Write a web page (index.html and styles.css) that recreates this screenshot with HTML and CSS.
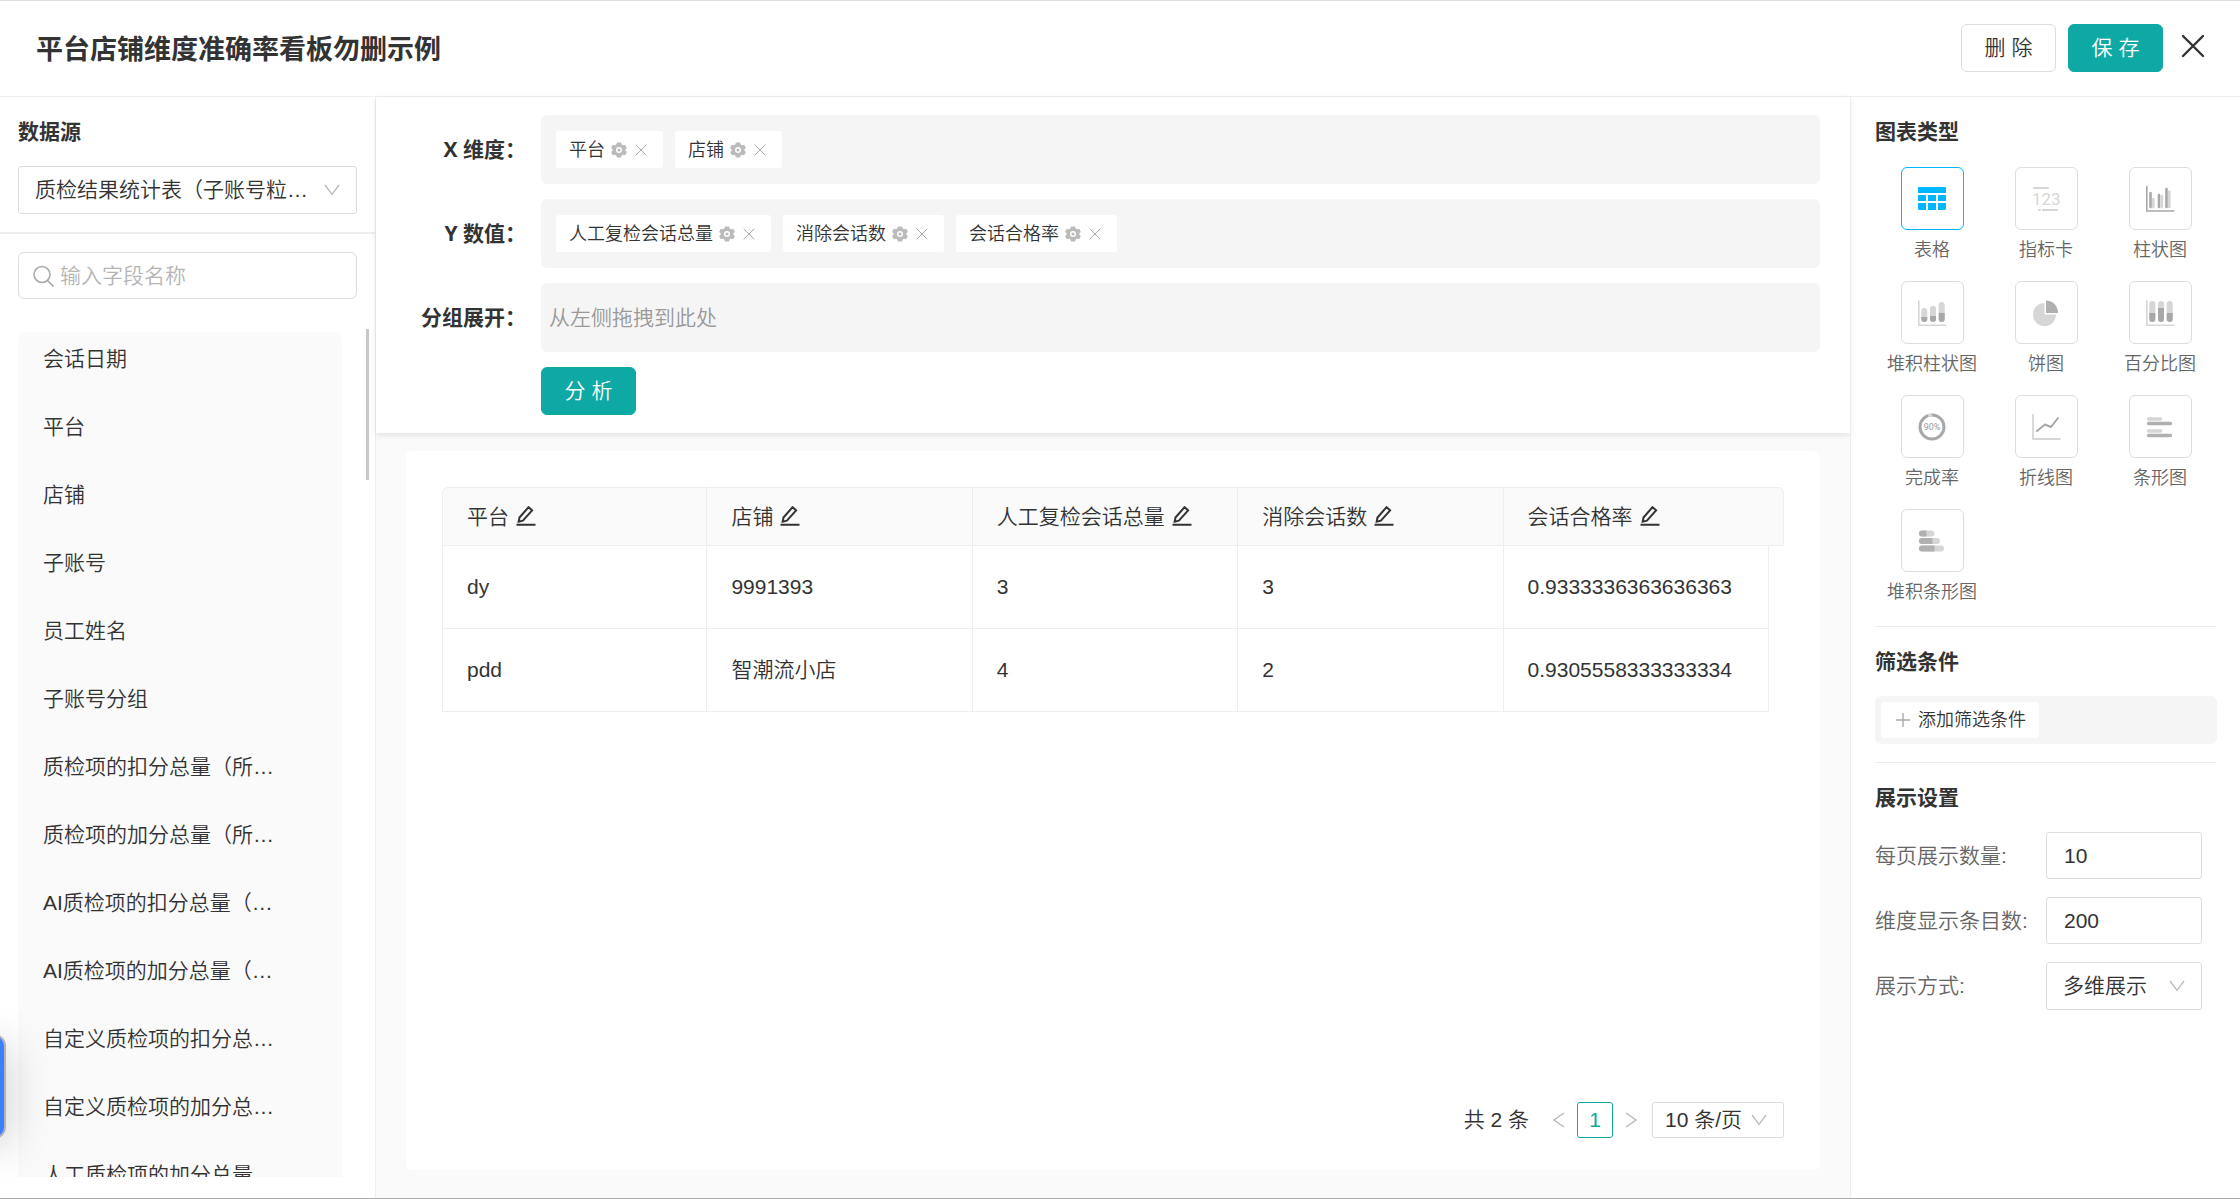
FILE: index.html
```html
<!DOCTYPE html>
<html lang="zh-CN">
<head>
<meta charset="utf-8">
<title>平台店铺维度准确率看板勿删示例</title>
<link rel="stylesheet" href="styles.css">
</head>
<body>
<svg class="sprite" aria-hidden="true">
  <symbol id="gear" viewBox="0 0 16 16"><path fill-rule="evenodd" d="M6 .5 10 .5l.7 2 1.300.7 2.200-.4 1.700 3.200-1.500 1.300v1.400l1.500 1.300-1.700 3.200-2.200-.4-1.300.7-.7 2H6l-.7-2-1.300-.7-2.200.4L.1 10l1.500-1.300V7.300L.1 6l1.700-3.200 2.200.4 1.300-.7zM8 5a3 3 0 1 0 0 6 3 3 0 0 0 0-6zm0 1.400a1.600 1.600 0 1 1 0 3.200 1.600 1.600 0 0 1 0-3.200z"/></symbol>
  <symbol id="cross" viewBox="0 0 12 12"><path d="M.7.7l10.600 10.600M11.300.7L.7 11.300" fill="none" stroke="currentColor"/></symbol>
  <symbol id="down" viewBox="0 0 16 12"><path d="M1 1l7 9.500L15 1" fill="none" stroke="currentColor" stroke-width="1.300"/></symbol>
  <symbol id="edit" viewBox="0 0 20 20"><path d="M3.500 11.500L12.500 1.200l3.600 3.100-9.200 10.300-4.200 1zM.5 18.800h19" fill="none" stroke="currentColor" stroke-width="2"/></symbol>
</svg>
<div class="page">
  <header class="top">
    <h1>平台店铺维度准确率看板勿删示例</h1>
    <div class="actions">
      <button class="btn" type="button">删 除</button>
      <button class="btn primary" type="button">保 存</button>
      <button class="close" type="button" aria-label="关闭"><svg viewBox="0 0 24 24"><path d="M2 2l20 20M22 2L2 22" fill="none" stroke="currentColor" stroke-width="2.400" stroke-linecap="round"/></svg></button>
    </div>
  </header>
  <div class="body">
    <aside class="left">
      <div class="source">
        <h2><label for="source">数据源</label></h2>
        <div class="select">
          <select id="source"><option>质检结果统计表（子账号粒度）</option></select>
          <svg><use href="#down"/></svg>
        </div>
      </div>
      <div class="search">
        <svg viewBox="0 0 22 22"><path d="M18 9.500a8 8 0 1 1-16 0 8 8 0 0 1 16 0zM15.500 15.500l6 6" fill="none" stroke="currentColor" stroke-width="1.600"/></svg>
        <input type="text" placeholder="输入字段名称" aria-label="输入字段名称">
      </div>
      <div class="scroller">
        <ul class="fields">
          <li>会话日期</li><li>平台</li><li>店铺</li><li>子账号</li><li>员工姓名</li><li>子账号分组</li>
          <li>质检项的扣分总量（所有）</li><li>质检项的加分总量（所有）</li>
          <li>AI质检项的扣分总量（所有）</li><li>AI质检项的加分总量（所有）</li>
          <li>自定义质检项的扣分总量（所有）</li><li>自定义质检项的加分总量（所有）</li><li>人工质检项的加分总量</li>
        </ul>
        <div class="track"><div class="thumb"></div></div>
      </div>
    </aside>
    <main>
      <section class="config">
        <div class="row"><h3>X 维度：</h3>
          <div class="drop">
            <span class="tag">平台<svg class="gear"><use href="#gear"/></svg><svg class="cross"><use href="#cross"/></svg></span>
            <span class="tag">店铺<svg class="gear"><use href="#gear"/></svg><svg class="cross"><use href="#cross"/></svg></span>
          </div></div>
        <div class="row"><h3>Y 数值：</h3>
          <div class="drop">
            <span class="tag">人工复检会话总量<svg class="gear"><use href="#gear"/></svg><svg class="cross"><use href="#cross"/></svg></span>
            <span class="tag">消除会话数<svg class="gear"><use href="#gear"/></svg><svg class="cross"><use href="#cross"/></svg></span>
            <span class="tag">会话合格率<svg class="gear"><use href="#gear"/></svg><svg class="cross"><use href="#cross"/></svg></span>
          </div></div>
        <div class="row"><h3>分组展开：</h3><div class="drop empty">从左侧拖拽到此处</div></div>
        <div class="row"><h3></h3><button class="btn primary" type="button">分 析</button></div>
      </section>
      <section class="result">
        <div class="card">
          <table>
            <colgroup><col><col><col><col><col><col class="gutter"></colgroup>
            <thead><tr>
              <th>平台<svg><use href="#edit"/></svg></th>
              <th>店铺<svg><use href="#edit"/></svg></th>
              <th>人工复检会话总量<svg><use href="#edit"/></svg></th>
              <th>消除会话数<svg><use href="#edit"/></svg></th>
              <th colspan="2">会话合格率<svg><use href="#edit"/></svg></th>
            </tr></thead>
            <tbody>
              <tr><td>dy</td><td>9991393</td><td>3</td><td>3</td><td>0.9333336363636363</td></tr>
              <tr><td>pdd</td><td>智潮流小店</td><td>4</td><td>2</td><td>0.9305558333333334</td></tr>
            </tbody>
          </table>
          <nav class="pager" aria-label="分页">
            <span>共 2 条</span>
            <button class="step" type="button" aria-label="上一页"><svg viewBox="0 0 12 16"><path d="M11 1L1 8l10 7"/></svg></button>
            <button class="num" type="button">1</button>
            <button class="step" type="button" aria-label="下一页"><svg viewBox="0 0 12 16"><path d="M1 1l10 7-10 7"/></svg></button>
            <div class="select small">
              <select aria-label="每页条数"><option>10 条/页</option></select>
              <svg><use href="#down"/></svg>
            </div>
          </nav>
        </div>
      </section>
    </main>
    <aside class="right">
      <section>
        <h2>图表类型</h2>
        <div class="charts">
          <button class="chart on" type="button"><span class="box"><svg viewBox="0 0 30 30"><g fill="#00b7ff"><path d="M2 3h26a1 1 0 0 1 1 1v5H1V4a1 1 0 0 1 1-1zM1 11h8v6H1zM11 11h8v6h-8zM21 11h8v6h-8zM1 19h8v7H2.500A1.500 1.500 0 0 1 1 24.500zM11 19h8v7h-8zM21 19h8v5.500a1.500 1.500 0 0 1-1.500 1.500H21z"/></g></svg></span>表格</button>
          <button class="chart" type="button"><span class="box"><svg viewBox="0 0 30 30"><path d="M3 4h14M12 26h14M8 26h1" fill="none" stroke="#d6d6d6" stroke-width="2" stroke-linecap="round"/><text x="1" y="21" class="digits">123</text></svg></span>指标卡</button>
          <button class="chart" type="button"><span class="box"><svg viewBox="0 0 30 30"><g fill="none" stroke-linecap="round"><path d="M1.800 2.500v24.500h27" stroke="#a8a8a8" stroke-width="1.600"/><path d="M5.500 9v14M14 11v12M21.500 5v18" stroke="#a8a8a8" stroke-width="2.600"/><path d="M8.300 15v8M16.800 12v11M24.300 7.500V23" stroke="#d6d6d6" stroke-width="2.600"/></g></svg></span>柱状图</button>
          <button class="chart" type="button"><span class="box"><svg viewBox="0 0 30 30"><g fill="none" stroke-linecap="round"><path d="M1.800 3v24.200h27" stroke="#d6d6d6" stroke-width="1.600"/><path d="M7.300 13v8M16 11v10M24.700 7v14" stroke="#d6d6d6" stroke-width="6"/></g><path d="M4.300 19h6v2a3 3 0 0 1-6 0zM13 18h6v3a3 3 0 0 1-6 0zM21.700 15h6v6a3 3 0 0 1-6 0z" fill="#a8a8a8"/></svg></span>堆积柱状图</button>
          <button class="chart" type="button"><span class="box"><svg viewBox="0 0 30 30"><path d="M13.500 5v11.500H25A11.500 11.500 0 1 1 13.500 5z" fill="#d6d6d6"/><path d="M15 2.500A12 12 0 0 1 27 15H15z" fill="#b0b0b0"/></svg></span>饼图</button>
          <button class="chart" type="button"><span class="box"><svg viewBox="0 0 30 30"><g fill="none" stroke-linecap="round"><path d="M1.800 3v24.200h27" stroke="#d6d6d6" stroke-width="1.600"/><path d="M7.300 6v15M16 6v15M24.700 6v15" stroke="#d6d6d6" stroke-width="6"/></g><path d="M4.300 15h6v6a3 3 0 0 1-6 0zM13 10h6v11a3 3 0 0 1-6 0zM21.700 15h6v6a3 3 0 0 1-6 0z" fill="#a8a8a8"/></svg></span>百分比图</button>
          <button class="chart" type="button"><span class="box"><svg viewBox="0 0 30 30"><circle cx="15" cy="15" r="12" fill="none" stroke="#a8a8a8" stroke-width="3"/><path d="M11 3.700A12 12 0 0 1 15 3" fill="none" stroke="#d6d6d6" stroke-width="3"/><text x="15" y="18" class="percent">90%</text></svg></span>完成率</button>
          <button class="chart" type="button"><span class="box"><svg viewBox="0 0 30 30"><g fill="none" stroke-linecap="round" stroke-linejoin="round"><path d="M2 3v24h27" stroke="#d6d6d6" stroke-width="1.800"/><path d="M6 19l8-6.500 6 2.500L27 6" stroke="#a8a8a8" stroke-width="2"/></g></svg></span>折线图</button>
          <button class="chart" type="button"><span class="box"><svg viewBox="0 0 30 30"><g fill="none" stroke-linecap="round" stroke-width="3.400"><path d="M3.500 7h12M3.500 19h12" stroke="#d6d6d6"/><path d="M3.500 11.500H25.500M3.500 23.500H25.500" stroke="#b0b0b0"/></g></svg></span>条形图</button>
          <button class="chart" type="button"><span class="box"><svg viewBox="0 0 30 30"><g fill="none" stroke-linecap="round" stroke-width="6"><path d="M5 7.500h9.500M5 15h15M5 22.500h19" stroke="#d6d6d6"/></g><path d="M5 4.500h4.500v6H5a3 3 0 0 1 0-6zM5 12h10.500v6H5a3 3 0 0 1 0-6zM5 19.500h12.500v6H5a3 3 0 0 1 0-6z" fill="#b0b0b0"/></svg></span>堆积条形图</button>
        </div>
      </section>
      <section>
        <h2>筛选条件</h2>
        <div class="filter"><button type="button"><svg viewBox="0 0 14 14"><path d="M7 0v14M0 7h14" fill="none" stroke="#aaa" stroke-width="1.400"/></svg>添加筛选条件</button></div>
      </section>
      <section>
        <h2>展示设置</h2>
        <div class="settings">
          <label for="size">每页展示数量:</label><input id="size" type="text" value="10">
          <label for="limit">维度显示条目数:</label><input id="limit" type="text" value="200">
          <label for="mode">展示方式:</label>
          <div class="select"><select id="mode"><option>多维展示</option></select><svg><use href="#down"/></svg></div>
        </div>
      </section>
    </aside>
  </div>
  <div class="handle"></div>
</div>
</body>
</html>
```

FILE: styles.css
```css
* { box-sizing: border-box; }
html, body { height: 100%; }
body {
  margin: 0;
  color: #333;
  background: #fff;
  font: 350 21px/32px "Liberation Sans", "Noto Sans CJK SC", sans-serif;
}
h1, h2, h3 { margin: 0; font-weight: 700; font-family: "Noto Sans CJK SC", sans-serif; }
h1 { font-size: 27px; }
h2, h3 { font-size: 21px; }
h3 { font-family: "Open Sans", "Noto Sans CJK SC", sans-serif; }
button, input, select { font: inherit; color: inherit; }
button { padding: 0; border: 0; background: none; }
svg { flex: none; }
.sprite { display: none; }

.page {
  position: relative;
  display: flex;
  flex-direction: column;
  height: 100vh;
  overflow: hidden;
  border-top: 1px solid #ddd;
  border-bottom: 1px solid #aaa;
}
.top {
  display: flex;
  align-items: center;
  justify-content: space-between;
  height: 96px;
  padding: 0 35px 2px 36px;
  border-bottom: 1px solid #eee;
}
.actions { display: flex; align-items: center; gap: 12px; }
.btn {
  width: 95px;
  height: 48px;
  border: 1px solid #ddd;
  border-radius: 6px;
  background: #fff;
}
.btn.primary { border-color: #0fa9a5; background: #0fa9a5; color: #fff; }
.close { display: flex; margin: 0 0 4px 6px; }
.close svg { width: 24px; height: 24px; }

.body { display: flex; flex: 1; min-height: 0; }
.left {
  display: flex;
  flex-direction: column;
  width: 376px;
  border-right: 1px solid #eee;
}
.source { padding: 17px 18px 18px; border-bottom: 2px solid #eee; }
.source h2 { margin-bottom: 20px; }
.select { position: relative; }
.select select {
  display: block;
  width: 100%;
  height: 48px;
  padding: 0 48px 0 16px;
  border: 1px solid #ddd;
  border-radius: 3px;
  background: #fff;
  appearance: none;
  text-overflow: ellipsis;
}
.select svg {
  position: absolute;
  right: 17px;
  top: 50%;
  width: 16px;
  height: 12px;
  margin-top: -6px;
  color: #bbb;
  pointer-events: none;
}
.search {
  display: flex;
  align-items: center;
  gap: 6px;
  height: 47px;
  margin: 18px 18px 30px;
  padding: 0 13px;
  border: 1px solid #ddd;
  border-radius: 6px;
  color: #aaa;
}
.search svg { width: 22px; height: 22px; }
.search input { flex: 1; min-width: 0; padding: 0; border: 0; outline: 0; color: #333; }
.search input::placeholder { color: #b5b5b5; opacity: 1; }
.scroller {
  display: flex;
  flex: 1;
  min-height: 0;
  justify-content: space-between;
  overflow: hidden;
  margin-bottom: 21px;
  padding: 0 6px 0 18px;
}
.fields {
  width: 324px;
  height: max-content;
  margin: 3px 0 0;
  padding: 0;
  list-style: none;
  border-radius: 6px;
  background: #fafafa;
}
.fields li {
  width: 260px;
  height: 68px;
  margin-left: 25px;
  padding-top: 11px;
  padding-right: 24px;
  overflow: hidden;
  white-space: nowrap;
  text-overflow: ellipsis;
}
.thumb { width: 3px; height: 151px; background: #c8c8c8; }

main { display: flex; flex: 1; flex-direction: column; min-width: 0; background: #fafafa; }
.config {
  display: grid;
  gap: 15px;
  padding: 18px 30px;
  background: #fff;
  box-shadow: 0 2px 6px rgba(0, 0, 0, .1);
}
.row { display: flex; align-items: center; gap: 15px; }
.row h3 { width: 120px; padding-bottom: 2px; text-align: right; }
.drop {
  display: flex;
  flex: 1;
  align-items: center;
  gap: 12px;
  height: 69px;
  padding: 0 15px;
  border-radius: 6px;
  background: #f5f5f5;
}
.drop.empty { padding: 0 8px; color: #999; }
.tag {
  display: flex;
  align-items: center;
  height: 37px;
  padding: 0 16px 0 13px;
  border-radius: 3px;
  background: #fff;
  font-size: 18px;
}
.gear { width: 16px; height: 16px; margin: 0 8px 0 6px; fill: #bbb; }
.cross { width: 12px; height: 12px; color: #aaa; }
.result { display: flex; flex: 1; padding: 18px 30px 28px; min-height: 0; }
.card {
  display: flex;
  flex: 1;
  flex-direction: column;
  justify-content: space-between;
  padding: 36px 36px 32px;
  border-radius: 6px;
  background: #fff;
}
table { width: 100%; table-layout: fixed; border-collapse: separate; border-spacing: 0; }
.gutter { width: 15px; }
th, td {
  height: 83px;
  padding: 0 24px;
  border-right: 1px solid #eee;
  border-bottom: 1px solid #eee;
  text-align: left;
  font-weight: 350;
  white-space: nowrap;
}
th { height: 59px; border-top: 1px solid #eee; background: #fafafa; }
th:first-child, td:first-child { border-left: 1px solid #eee; }
th:first-child { border-top-left-radius: 6px; }
th:last-child { border-top-right-radius: 6px; }
th svg { width: 20px; height: 20px; margin-left: 7px; vertical-align: -2px; }
.pager { display: flex; align-items: center; justify-content: flex-end; height: 36px; }
.step { display: flex; justify-content: center; width: 36px; }
.pager span { margin-right: 12px; }
.step svg { width: 12px; height: 16px; fill: none; stroke: #bbb; stroke-width: 1.500; }
.num { width: 36px; height: 36px; border: 1px solid #0fa9a5; border-radius: 3px; color: #0fa9a5; }
.select.small { width: 132px; margin-left: 3px; }
.select.small select { height: 36px; padding: 0 28px 0 12px; }

.right { width: 390px; padding: 17px 23px 0 24px; border-left: 1px solid #eee; }
.right section { padding-bottom: 18px; }
.right section + section { padding-top: 17px; border-top: 1px solid #eee; }
.right h2 { margin-bottom: 20px; }
.charts { display: grid; grid-template-columns: repeat(3, 1fr); gap: 17px 0; padding: 1px 0 2px; }
.chart {
  display: flex;
  flex-direction: column;
  align-items: center;
  gap: 7px;
  color: #666;
  font-size: 18px;
  line-height: 27px;
  white-space: nowrap;
}
.box {
  display: grid;
  place-items: center;
  width: 63px;
  height: 63px;
  border: 1px solid #ddd;
  border-radius: 6px;
}
.on .box { border-color: #00b7ff; }
.box svg { width: 30px; height: 30px; }
.digits { font: 17px "Roboto", sans-serif; fill: #d6d6d6; }
.percent { font: 9px "Roboto", sans-serif; fill: #999; text-anchor: middle; }
.filter { display: flex; padding: 6px; border-radius: 6px; background: #f5f5f5; }
.filter button {
  display: flex;
  align-items: center;
  gap: 8px;
  height: 36px;
  padding: 0 13px 0 15px;
  border-radius: 3px;
  background: #fff;
  font-size: 18px;
}
.filter svg { width: 14px; height: 14px; }
.settings {
  display: grid;
  grid-template-columns: 1fr 156px;
  gap: 18px 0;
  align-items: center;
  padding-right: 15px;
}
.settings label { color: #666; white-space: nowrap; }
.settings input { width: 100%; height: 47px; padding: 0 17px; border: 1px solid #ddd; border-radius: 3px; }
.settings .select select { padding: 0 40px 0 16px; }

.handle {
  position: absolute;
  left: -20px;
  top: 1033px;
  width: 26px;
  height: 105px;
  border: 2px solid #b4b4b4;
  border-radius: 12px;
  background: #3d7eff;
  box-shadow: 0 9px 42px rgba(0, 0, 0, .25);
}
```
